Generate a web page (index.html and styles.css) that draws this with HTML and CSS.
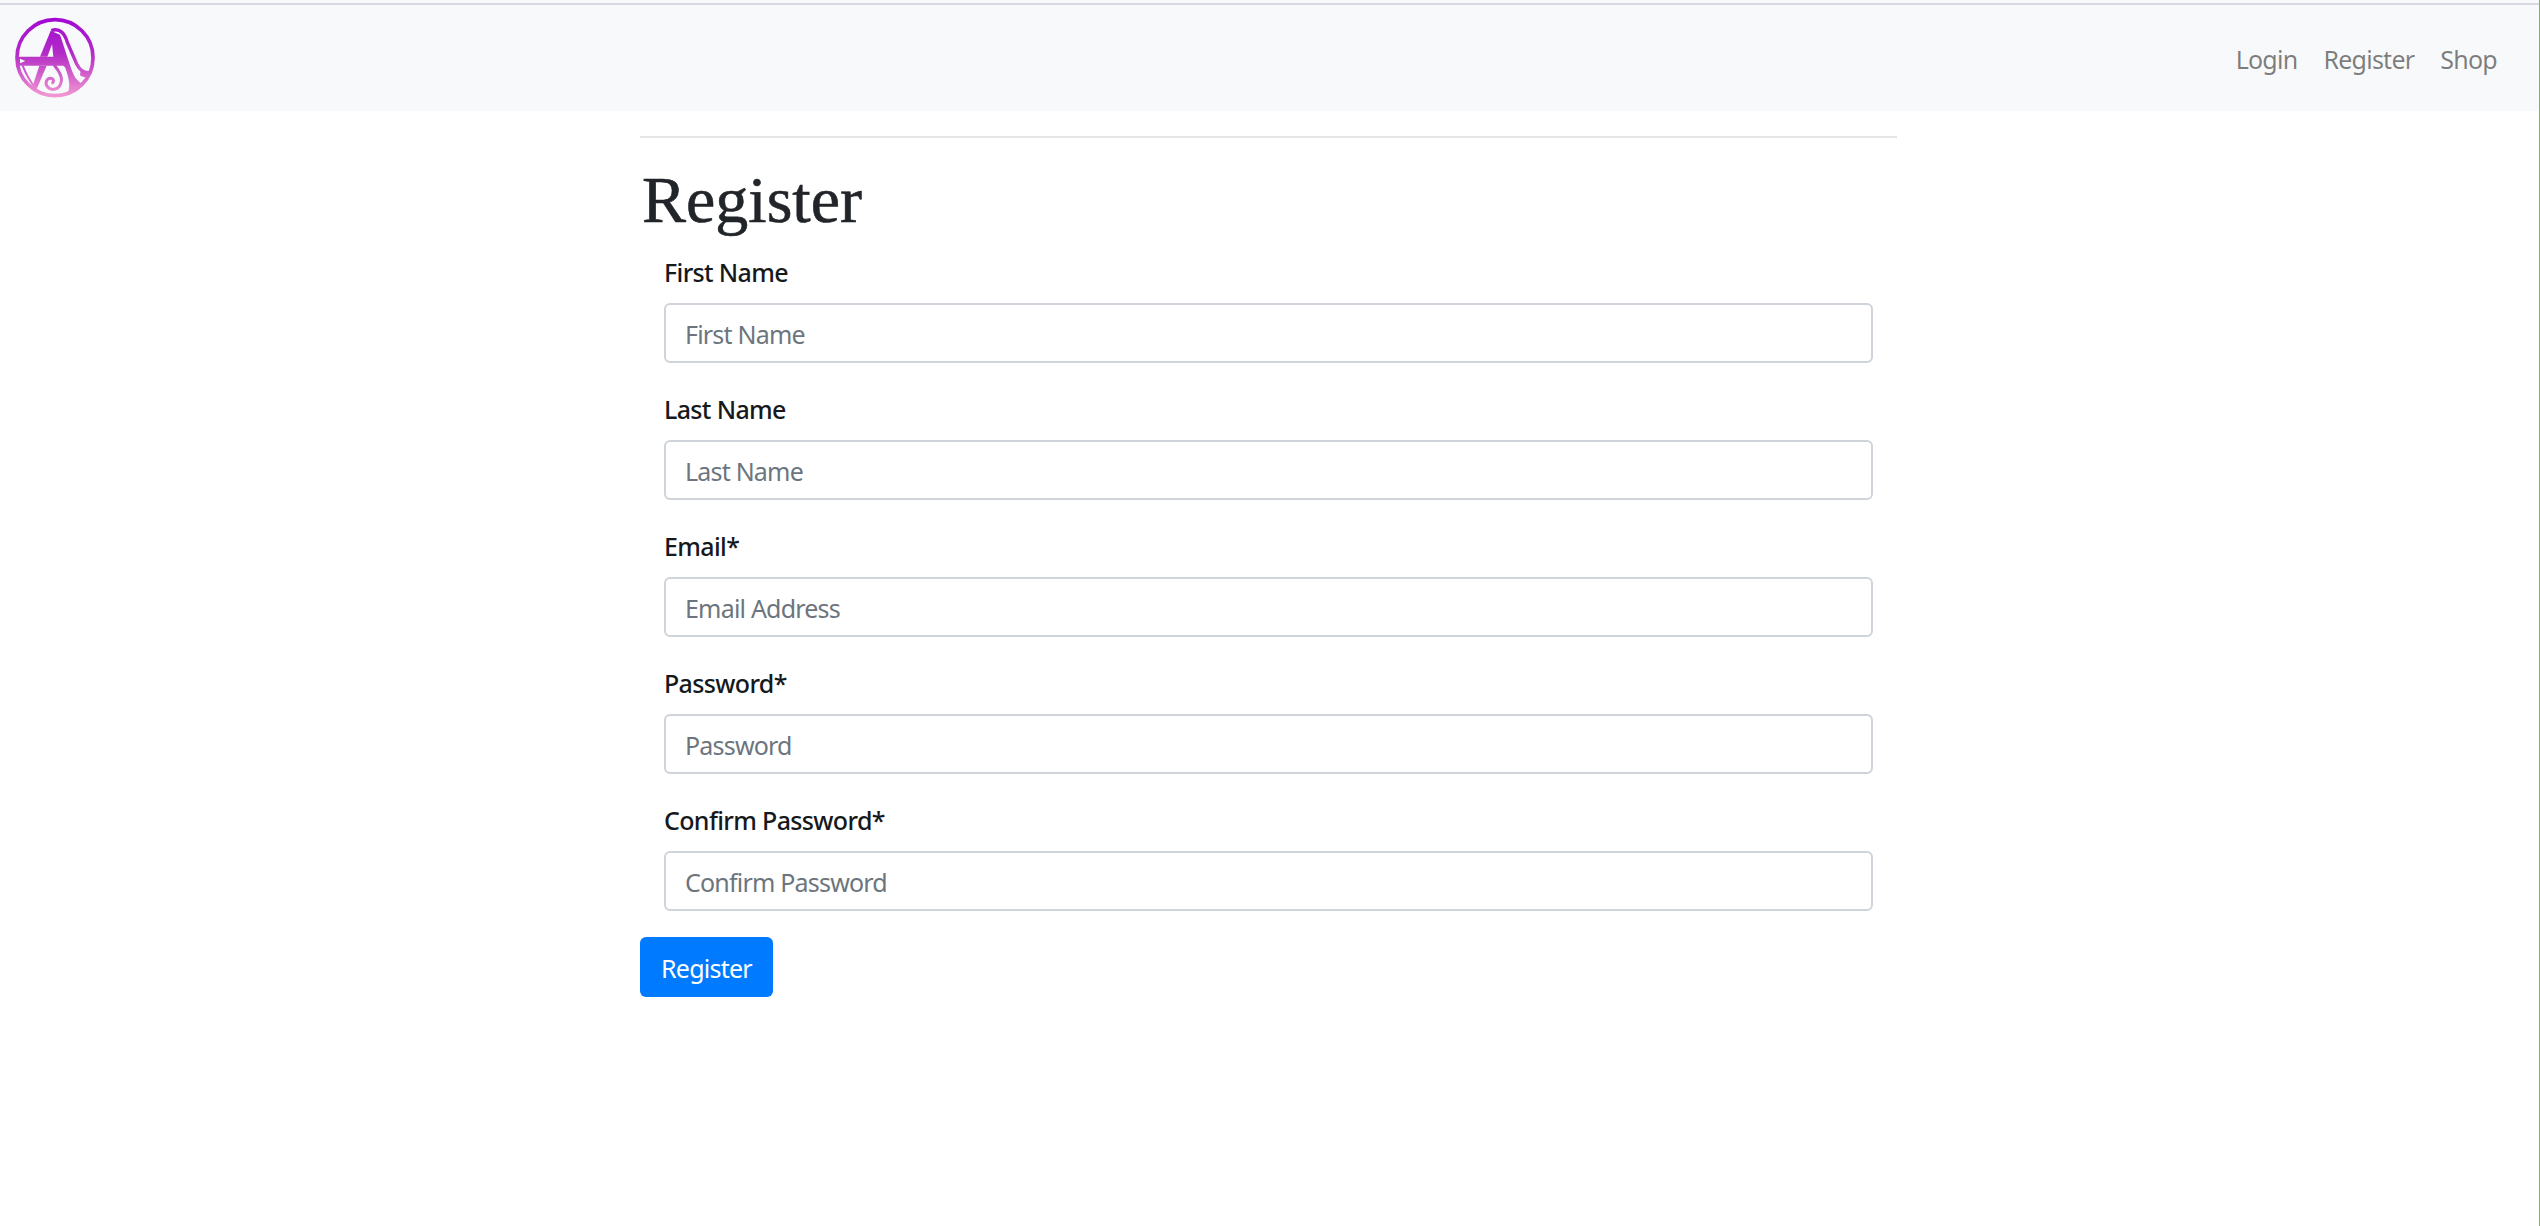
FILE: index.html
```html
<!DOCTYPE html>
<html lang="en">
<head>
<meta charset="utf-8">
<title>Register</title>
<link rel="stylesheet" href="styles.css">
</head>
<body>
<div class="topstrip"></div>
<nav class="navbar">
  <a class="brand" href="#">
    <svg class="logo" viewBox="0 0 270 270" width="90" height="90" aria-hidden="true">
      <defs>
        <linearGradient id="lg" gradientUnits="userSpaceOnUse" x1="135" y1="12" x2="135" y2="250">
          <stop offset="0" stop-color="#a208d4"/>
          <stop offset="0.45" stop-color="#b32cc6"/>
          <stop offset="1" stop-color="#f49ad2"/>
        </linearGradient>
        <clipPath id="disc"><circle cx="135" cy="131" r="119"/></clipPath>
      </defs>
      <circle cx="135" cy="131" r="114" fill="none" stroke="url(#lg)" stroke-width="11"/>
      <g clip-path="url(#disc)">
        <path fill="url(#lg)" d="M122 50 L130 80 L112 128 L90 128 Z"/>
        <path fill="url(#lg)" fill-rule="evenodd" d="M18 128 L170 128 L172 155 L18 155 Z M30 134 L46 141 L30 148 Z"/>
        <path fill="url(#lg)" d="M122 50 L150 62 C160 90 178 150 190 180 C196 195 208 205 220 212 L194 250 L165 250 C186 225 178 195 165 160 L130 128 Z"/>
        <path fill="none" stroke="url(#lg)" stroke-width="10" d="M124 50 C150 40 165 60 172 85 L200 150 C210 170 225 178 240 176"/>
        <path fill="url(#lg)" d="M212 170 C225 178 238 176 252 168 L250 186 C232 192 222 192 210 184 Z"/>
        <path fill="url(#lg)" d="M88 155 L110 155 L78 230 L66 222 Z"/>
        <path fill="none" stroke="url(#lg)" stroke-width="6" d="M38 155 C50 185 62 205 76 222"/>
        <path fill="none" stroke="url(#lg)" stroke-width="9" stroke-linecap="round" d="M128 206 C136 198 124 188 113 196 C102 208 112 228 132 226 C152 222 160 200 150 180 C146 170 140 162 134 155"/>
        <path fill="url(#lg)" fill-rule="evenodd" d="M188 250 L215 210 L245 206 L232 250 Z M204 232 L218 219 L226 222 L214 232 Z"/>
      </g>
    </svg>
  </a>
  <ul class="nav-links">
    <li><a href="#">Login</a></li>
    <li><a href="#">Register</a></li>
    <li><a href="#">Shop</a></li>
  </ul>
</nav>
<main class="container">
  <hr class="rule">
  <h1 class="title">Register</h1>
  <form class="form">
    <div class="group"><label class="label" for="f1">First Name</label><input class="input" id="f1" placeholder="First Name"></div>
    <div class="group"><label class="label" for="f2">Last Name</label><input class="input" id="f2" placeholder="Last Name"></div>
    <div class="group"><label class="label" for="f3">Email*</label><input class="input" id="f3" placeholder="Email Address"></div>
    <div class="group"><label class="label" for="f4">Password*</label><input class="input" id="f4" placeholder="Password"></div>
    <div class="group"><label class="label" for="f5">Confirm Password*</label><input class="input" id="f5" placeholder="Confirm Password"></div>
    <button class="btn" type="button">Register</button>
  </form>
</main>
</body>
</html>
```
FILE: styles.css
```css
* { box-sizing: border-box; }
html, body { height: 100%; }
body {
  margin: 0;
  background: #fff;
  color: #212529;
  font-family: "Noto Sans", "Open Sans", sans-serif;
  font-size: 25px;
  border-right: 1px solid #8fb339;
  overflow: hidden;
}
.topstrip { height: 3px; background: #f8f9fa; }
.navbar {
  height: 108px;
  background: #f8f9fa;
  border-top: 2px solid #d8d9e0;
  display: flex;
  align-items: center;
  justify-content: space-between;
  padding: 2px 42px 0 10px;
}
.brand { display: flex; }
.logo { display: block; }
.nav-links { display: flex; list-style: none; margin: 0; padding: 0; gap: 26px; }
.nav-links a { color: rgba(0,0,0,.5); text-decoration: none; font-size: 25px; letter-spacing: -0.75px; }
.container { width: 1257px; margin: 25px auto 0 640px; }
.rule { margin: 0; border: 0; border-top: 2px solid #e6e6e6; }
.title {
  margin: 22px 0 0;
  padding: 0 0 15px 2px;
  font-family: "Liberation Serif", serif;
  font-weight: 400;
  font-size: 66px;
  line-height: 80px;
  color: #212529;
  -webkit-text-stroke: 0.6px #212529;
}
.form { display: flex; flex-direction: column; align-items: flex-start; }
.group { width: 1233px; padding: 0 0 0 24px; height: 137px; display: flex; flex-direction: column; }
.label { font-size: 25px; line-height: 35px; color: #16191c; letter-spacing: -0.65px; margin: 0 0 13px; font-weight: 500; }
.input {
  width: 1209px;
  height: 60px;
  padding: 2px 19px 0;
  border: 2px solid #ced4da;
  border-radius: 6px;
  font: inherit;
  letter-spacing: -0.8px;
  color: #495057;
  background: #fff;
}
.input::placeholder { color: #6c757d; opacity: 1; }
.btn {
  height: 60px;
  width: 133px;
  margin-top: -3px;
  border: 0;
  border-radius: 6px;
  background: #007bff;
  color: #fff;
  font: inherit;
  letter-spacing: -0.75px;
  padding: 2px 0 0;
}
```
